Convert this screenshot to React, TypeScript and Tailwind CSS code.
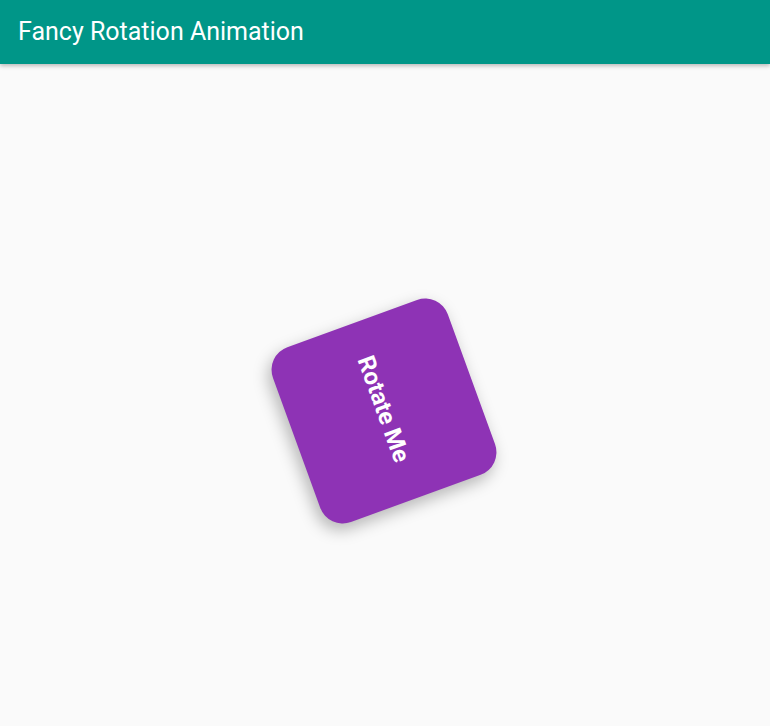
import React from "react";

function RotatingCard() {
  return (
    <div className="w-[186px] h-[186px] rounded-[24px] bg-[#8e33b5] shadow-[-5px_5px_16px_rgba(0,0,0,0.28)] flex items-center justify-center -rotate-20">
      <span className="rotate-90 text-white text-[24px] font-bold whitespace-nowrap -translate-y-[2px]">
        Rotate Me
      </span>
    </div>
  );
}

export default function App() {
  return (
    <div
      className="w-[770px] h-[726px] bg-[#fafafa] flex flex-col overflow-hidden"
      style={{ fontFamily: "Roboto, 'Noto Sans', sans-serif" }}
    >
      <header className="h-[64px] bg-[#009688] flex items-center px-[18px] shadow-[0_2px_4px_rgba(0,0,0,0.25)] z-10 shrink-0">
        <h1 className="text-white text-[25px] font-normal">Fancy Rotation Animation</h1>
      </header>
      <main className="flex-1 flex items-center justify-center pt-[31px] pr-[3px]">
        <RotatingCard />
      </main>
    </div>
  );
}
